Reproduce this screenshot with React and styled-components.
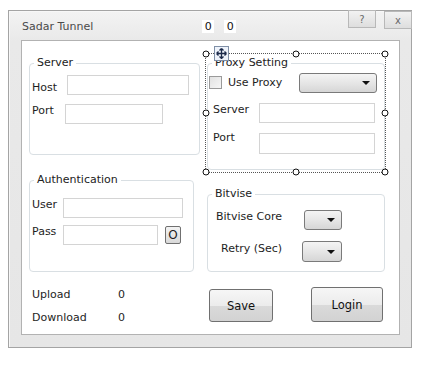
import React from 'react';
import styled, { createGlobalStyle } from 'styled-components';

const Global = createGlobalStyle`
  body {
    margin: 0;
    background: #fff;
    font-family: "DejaVu Sans", Verdana, sans-serif;
    font-size: 11px;
    color: #1e1e1e;
  }
`;

const Window = styled.div`
  margin: 10px 0 0 8px;
  width: 404px;
  height: 338px;
  box-sizing: border-box;
  border: 1px solid #a4a4a4;
  box-shadow: inset 1px 1px 0 #f7f7f7;
  background: linear-gradient(#f3f3f3, #e9e9e9 30px, #e6e6e6);
  padding: 0 11px 12px 12px;
  display: flex;
  flex-direction: column;
`;

const TitleBar = styled.div`
  height: 29px;
  display: flex;
  align-items: flex-start;
  margin-right: -12px;
`;

const Title = styled.div`
  margin: 9px 0 0 1px;
  line-height: 14px;
  color: #4a4a4a;
`;

const Counters = styled.div`
  display: flex;
  gap: 10px;
  margin: 9px 0 0 109px;
`;

const Counter = styled.span`
  background: #fff;
  width: 12px;
  line-height: 13px;
  text-align: center;
  color: #111;
`;

const TitleButtons = styled.div`
  margin: -1px 0 0 auto;
  display: flex;
  gap: 8px;
`;

const TitleButton = styled.div`
  width: 28px;
  height: 18px;
  margin-top: ${(p) => p.$drop || 0}px;
  box-sizing: border-box;
  border: 1px solid #b8b8b8;
  background: linear-gradient(#f2f2f2, #dedede);
  color: #6a6a6a;
  font-size: 10px;
  display: flex;
  align-items: center;
  justify-content: center;
`;

const Panel = styled.div`
  flex: 1;
  background: #fff;
  border: 1px solid #b2b2b2;
  padding: 15px 0 0 7px;
  display: flex;
  gap: 7px;
`;

const Column = styled.div`
  width: ${(p) => p.$w}px;
  display: flex;
  flex-direction: column;
`;

const Group = styled.fieldset`
  margin: ${(p) => p.$top || 0}px 0 0;
  width: ${(p) => p.$w}px;
  height: ${(p) => p.$h}px;
  box-sizing: border-box;
  border: 1px solid #d9dfe3;
  border-radius: 4px;
  padding: ${(p) => p.$pt || 5}px 0 0 0;
  min-width: 0;
  display: flex;
  flex-direction: column;
  gap: ${(p) => p.$gap || 9}px;

  legend {
    margin-left: 4px;
    padding: 0 3px;
    line-height: 14px;
    font-size: 11px;
    color: #222;
  }
`;

const Row = styled.div`
  display: flex;
  align-items: flex-start;
  padding-left: ${(p) => p.$indent || 0}px;
`;

const Label = styled.span`
  width: ${(p) => p.$w}px;
  flex: none;
  margin-top: ${(p) => p.$dy || 0}px;
  line-height: 14px;
  color: #1e1e1e;
`;

const TextBox = styled.div`
  width: ${(p) => p.$w}px;
  height: ${(p) => p.$h || 20}px;
  box-sizing: border-box;
  border: 1px solid #d4d4d4;
  background: #fff;
`;

const Combo = styled.div`
  width: ${(p) => p.$w}px;
  height: ${(p) => p.$h || 20}px;
  box-sizing: border-box;
  border: 1px solid #7a7a7a;
  border-radius: 3px;
  background: linear-gradient(#f4f4f4, #e6e6e6 50%, #d6d6d6);
  display: flex;
  align-items: center;
  justify-content: flex-end;
  padding-right: 6px;

  &::after {
    content: '';
    border-left: 4px solid transparent;
    border-right: 4px solid transparent;
    border-top: 4px solid #111;
  }
`;

const Check = styled.div`
  width: 13px;
  height: 13px;
  box-sizing: border-box;
  border: 1px solid #9a9a9a;
  background: linear-gradient(135deg, #e2e2e2, #f6f6f6);
  margin: 3px 6px 0 0;
`;

const SmallButton = styled.div`
  width: 16px;
  height: 18px;
  box-sizing: border-box;
  margin: 1px 0 0 7px;
  border: 1px solid #707070;
  border-radius: 2px;
  background: linear-gradient(#f3f3f3, #d9d9d9);
  display: flex;
  align-items: center;
  justify-content: center;
  font-size: 12px;
`;

const Stats = styled.div`
  margin-top: 16px;
  padding-left: 3px;
  display: grid;
  grid-template-columns: 86px auto;
  grid-auto-rows: 23px;
  line-height: 14px;
`;

const Selected = styled.div`
  position: relative;
`;

const Outline = styled.div`
  position: absolute;
  top: -3px;
  left: -2px;
  right: -1px;
  bottom: -3px;
  border: 1px dotted #555;
  pointer-events: none;
`;

const Handle = styled.span`
  position: absolute;
  width: 5px;
  height: 5px;
  border: 1px solid #111;
  border-radius: 50%;
  background: #fff;
  left: ${(p) => p.$x};
  top: ${(p) => p.$y};
  transform: translate(-50%, -50%);
`;

const Mover = styled.div`
  position: absolute;
  left: 7px;
  top: -10px;
  width: 15px;
  height: 15px;
  box-sizing: border-box;
  border: 1px solid #7f8fa6;
  background: #eef3fb;
  display: flex;
  align-items: center;
  justify-content: center;
`;

const ButtonRow = styled.div`
  margin-top: 15px;
  display: flex;
  align-items: flex-end;
`;

const PushButton = styled.div`
  width: ${(p) => p.$w}px;
  height: ${(p) => p.$h}px;
  margin-left: ${(p) => p.$left}px;
  box-sizing: border-box;
  border: 1px solid #707070;
  border-radius: 3px;
  background: linear-gradient(#f6f6f6, #ececec 50%, #dadada 51%, #d2d2d2);
  display: flex;
  align-items: center;
  justify-content: center;
  font-size: 11.5px;
  color: #111;
`;

const handles = [
  ['0%', '0%'], ['50%', '0%'], ['100%', '0%'],
  ['0%', '50%'], ['100%', '50%'],
  ['0%', '100%'], ['50%', '100%'], ['100%', '100%'],
];

export default function App() {
  return (
    <>
      <Global />
      <Window>
        <TitleBar>
          <Title>Sadar Tunnel</Title>
          <Counters>
            <Counter>0</Counter>
            <Counter>0</Counter>
          </Counters>
          <TitleButtons>
            <TitleButton>?</TitleButton>
            <TitleButton $drop={1}>x</TitleButton>
          </TitleButtons>
        </TitleBar>
        <Panel>
          <Column $w={171}>
            <Group $w={171} $h={99}>
              <legend>Server</legend>
              <Row $indent={2}>
                <Label $w={35} $dy={6}>Host</Label>
                <TextBox $w={122} />
              </Row>
              <Row $indent={2}>
                <Label $w={33}>Port</Label>
                <TextBox $w={98} />
              </Row>
            </Group>
            <Group $w={165} $h={99} $top={18} $gap={7} $pt={11}>
              <legend>Authentication</legend>
              <Row $indent={2}>
                <Label $w={31}>User</Label>
                <TextBox $w={120} />
              </Row>
              <Row $indent={2}>
                <Label $w={31}>Pass</Label>
                <TextBox $w={95} />
                <SmallButton>O</SmallButton>
              </Row>
            </Group>
            <Stats>
              <span>Upload</span>
              <span>0</span>
              <span>Download</span>
              <span>0</span>
            </Stats>
          </Column>
          <Column $w={178}>
            <Selected>
              <Group $w={178} $h={114} $gap={10} $pt={3}>
                <legend>Proxy Setting</legend>
                <Row $indent={1}>
                  <Check />
                  <Label $w={71} $dy={3}>Use Proxy</Label>
                  <Combo $w={78} />
                </Row>
                <Row $indent={5}>
                  <Label $w={46}>Server</Label>
                  <TextBox $w={116} />
                </Row>
                <Row $indent={5}>
                  <Label $w={46} $dy={-2}>Port</Label>
                  <TextBox $w={116} $h={21} />
                </Row>
              </Group>
              <Outline>
                {handles.map(([x, y]) => (
                  <Handle key={x + y} $x={x} $y={y} />
                ))}
              </Outline>
              <Mover>
                <svg width="11" height="11" viewBox="0 0 11 11">
                  <path
                    d="M5.5 0.5v10M0.5 5.5h10M5.5 0.5l-2 2M5.5 0.5l2 2M5.5 10.5l-2-2M5.5 10.5l2-2M0.5 5.5l2-2M0.5 5.5l2 2M10.5 5.5l-2-2M10.5 5.5l-2 2"
                    stroke="#1b2a4a"
                    strokeWidth="1.3"
                    fill="none"
                  />
                </svg>
              </Mover>
            </Selected>
            <Group $w={178} $h={85} $top={17} $gap={11} $pt={9}>
              <legend>Bitvise</legend>
              <Row $indent={8}>
                <Label $w={88}>Bitvise Core</Label>
                <Combo $w={38} />
              </Row>
              <Row $indent={13}>
                <Label $w={81} $dy={1}>Retry (Sec)</Label>
                <Combo $w={40} $h={21} />
              </Row>
            </Group>
            <ButtonRow>
              <PushButton $w={64} $h={33} $left={2}>Save</PushButton>
              <PushButton $w={72} $h={35} $left={38}>Login</PushButton>
            </ButtonRow>
          </Column>
        </Panel>
      </Window>
    </>
  );
}
